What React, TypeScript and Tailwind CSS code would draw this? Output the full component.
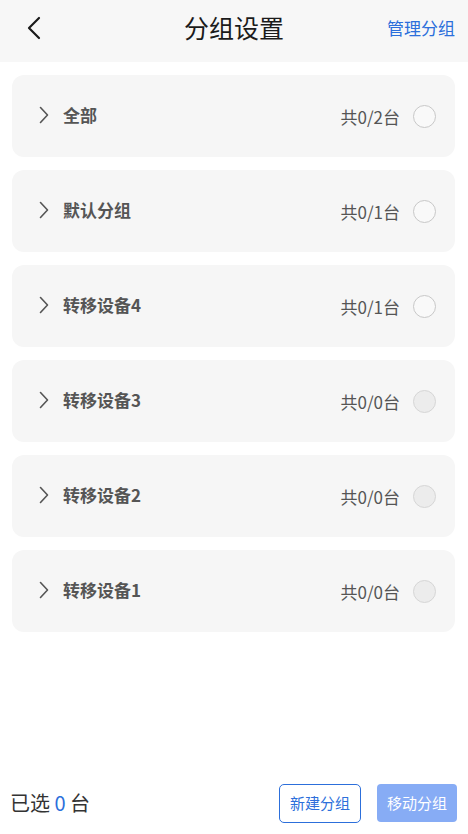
const GROUPS = [
  { name: "全部", selected: 0, total: 2 },
  { name: "默认分组", selected: 0, total: 1 },
  { name: "转移设备4", selected: 0, total: 1 },
  { name: "转移设备3", selected: 0, total: 0 },
  { name: "转移设备2", selected: 0, total: 0 },
  { name: "转移设备1", selected: 0, total: 0 },
];

const font = { fontFamily: '"Noto Sans CJK SC", "Noto Sans", sans-serif' };

function BackArrow() {
  return (
    <svg width="14" height="24" viewBox="0 0 14 24" fill="none">
      <path d="M12 2 L2 12 L12 22" stroke="#1b1b1b" strokeWidth="2.2" strokeLinecap="round" strokeLinejoin="round" />
    </svg>
  );
}

function Arrow() {
  return (
    <svg width="10" height="18" viewBox="0 0 10 18" fill="none">
      <path d="M1.5 1.5 L8.5 9 L1.5 16.5" stroke="#555" strokeWidth="1.6" strokeLinecap="round" strokeLinejoin="round" />
    </svg>
  );
}

export default function App() {
  return (
    <div className="w-[468px] h-[834px] bg-white flex flex-col" style={font}>
      <header className="h-[62px] shrink-0 bg-[#f7f7f7] flex items-center justify-between pl-[27px] pr-[13px] pb-[6px] relative">
        <BackArrow />
        <h1 className="absolute left-1/2 top-[27px] -translate-x-1/2 -translate-y-1/2 text-[25px] text-[#1b1b1b] leading-none">
          分组设置
        </h1>
        <button className="text-[17px] text-[#2c6fdb]">管理分组</button>
      </header>

      <main className="flex-1 flex flex-col gap-[13px] pl-[12px] pr-[13px] pt-[13px]">
        {GROUPS.map((g) => (
          <div
            key={g.name}
            className="h-[82px] rounded-[12px] bg-[#f6f6f6] flex items-center pl-[27px] pr-[19px]"
          >
            <span className="-mt-[3px]">
              <Arrow />
            </span>
            <span className="ml-[14px] text-[17px] font-bold text-[#555] -mt-[2px]">{g.name}</span>
            <span className="ml-auto text-[17px] text-[#555] mt-[1px]">
              共{g.selected}/{g.total}台
            </span>
            <span
              className={
                g.total > 0
                  ? "ml-[13px] w-[23px] h-[23px] rounded-full border-[1.5px] border-[#c8c8c8] bg-white/40"
                  : "ml-[13px] w-[23px] h-[23px] rounded-full border-[1.5px] border-[#d6d6d6] bg-[#ececec]"
              }
            />
          </div>
        ))}
      </main>

      <footer className="h-[62px] shrink-0 flex items-center pl-[10px] pr-[11px]">
        <span className="text-[20px] text-[#333]">
          已选 <span className="text-[#2c6fdb]">0</span> 台
        </span>
        <button className="ml-auto w-[82px] h-[39px] rounded-[5px] border border-[#2c6fdb] text-[15px] text-[#2c6fdb] bg-white">
          新建分组
        </button>
        <button className="ml-[16px] w-[80px] h-[38px] rounded-[4px] bg-[#87acf5] text-[15px] text-white">
          移动分组
        </button>
      </footer>
    </div>
  );
}
